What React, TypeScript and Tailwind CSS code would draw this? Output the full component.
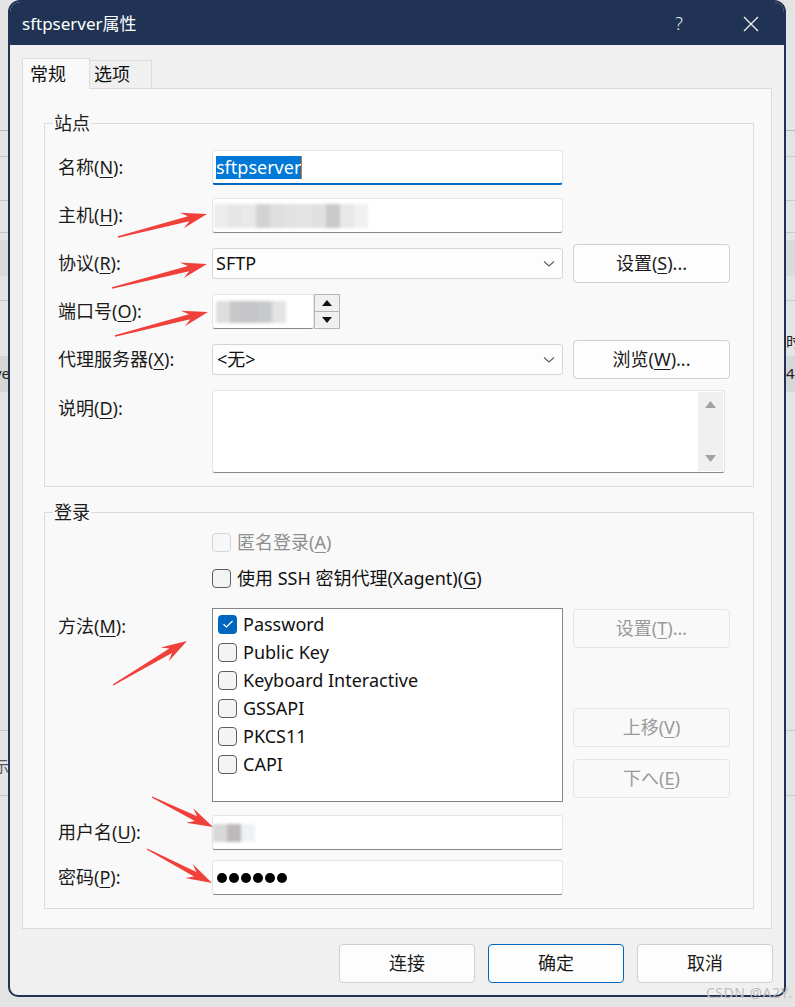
import React from "react";

const font = "font-['Noto_Sans','Noto_Sans_CJK_SC',sans-serif]";

function Mn({ pre, k, post = "" }: { pre: string; k: string; post?: string }) {
  return (
    <span>
      {pre}(<span className="underline decoration-1 underline-offset-[3px]">{k}</span>){post}
    </span>
  );
}

function Label({ children, top }: { children: React.ReactNode; top?: boolean }) {
  return (
    <div className={`flex w-[154px] shrink-0 text-[18px] text-[#1b1b1b] ${top ? "items-start pt-[5px]" : "items-center"}`}>
      {children}
    </div>
  );
}

function Group({ title, className, children }: { title: string; className?: string; children: React.ReactNode }) {
  return (
    <div className={`relative border border-[#dcdcdc] ${className ?? ""}`}>
      <span className="absolute -top-[13px] left-[8px] bg-[#f9f9f9] px-px text-[18px] leading-[24px] text-[#1b1b1b]">{title}</span>
      {children}
    </div>
  );
}

function Chevron() {
  return (
    <svg width="12" height="8" viewBox="0 0 12 8">
      <path d="M1 1.5 L6 6 L11 1.5" fill="none" stroke="#5c5c5c" strokeWidth="1.1" />
    </svg>
  );
}

function Btn({
  children,
  disabled,
  primary,
  wide = true,
  className,
}: {
  children: React.ReactNode;
  disabled?: boolean;
  primary?: boolean;
  wide?: boolean;
  className?: string;
}) {
  return (
    <div
      className={`flex h-[39px] items-center justify-center rounded-[4px] border text-[18px] ${wide ? "w-[157px]" : "w-[136px]"} ${
        disabled
          ? "border-[#e5e5e5] bg-[#f9f9f9] text-[#9a9a9a]"
          : primary
          ? "border-[#0067c0] bg-[#fdfdfd] text-[#1b1b1b]"
          : "border-[#d0d0d0] bg-[#fdfdfd] text-[#1b1b1b]"
      } ${className ?? ""}`}
    >
      {children}
    </div>
  );
}

function Box({ checked, disabled }: { checked?: boolean; disabled?: boolean }) {
  if (checked)
    return (
      <div className="flex h-[19px] w-[19px] shrink-0 items-center justify-center rounded-[4px] bg-[#0067c0]">
        <svg width="12" height="10" viewBox="0 0 12 10">
          <path d="M1.5 5.2 L4.5 8 L10.5 2" fill="none" stroke="#fff" strokeWidth="1.2" />
        </svg>
      </div>
    );
  return (
    <div
      className={`h-[19px] w-[19px] shrink-0 rounded-[4px] border ${
        disabled ? "border-[#d4d4d4] bg-[#f7f7f7]" : "border-[#5e5e5e] bg-[#f4f4f4]"
      }`}
    />
  );
}

function Mosaic({ cells, h }: { cells: string[]; h: number }) {
  return (
    <div className="flex blur-[1.5px]" style={{ height: h }}>
      {cells.map((c, i) => (
        <div key={i} className="w-[14px]" style={{ background: c }} />
      ))}
    </div>
  );
}

function arrowPts(x1: number, y1: number, x2: number, y2: number) {
  const dx = x2 - x1;
  const dy = y2 - y1;
  const len = Math.hypot(dx, dy);
  const ux = dx / len;
  const uy = dy / len;
  const nx = -uy;
  const ny = ux;
  const hl = 24;
  const hw = 8;
  const bw = 2.6;
  const tw = 0.7;
  const bx = x2 - ux * hl;
  const by = y2 - uy * hl;
  const p = (x: number, y: number) => `${x.toFixed(1)},${y.toFixed(1)}`;
  return [
    p(x1 + nx * tw, y1 + ny * tw),
    p(bx + ux * 5 + nx * bw, by + uy * 5 + ny * bw),
    p(bx - ux * 2 + nx * hw, by - uy * 2 + ny * hw),
    p(x2, y2),
    p(bx - ux * 2 - nx * hw, by - uy * 2 - ny * hw),
    p(bx + ux * 5 - nx * bw, by + uy * 5 - ny * bw),
    p(x1 - nx * tw, y1 - ny * tw),
  ].join(" ");
}

const arrows = [
  [118, 237, 207, 214],
  [112, 288, 207, 264],
  [115, 336, 208, 312],
  [113, 685, 187, 641],
  [152, 797, 213, 827],
  [147, 849, 212, 883],
];

const methods = ["Password", "Public Key", "Keyboard Interactive", "GSSAPI", "PKCS11", "CAPI"];

export default function App() {
  return (
    <div className={`relative h-[1007px] w-[795px] overflow-hidden bg-[#e4e4e4] ${font}`}>
      {/* window behind the dialog */}
      <div className="absolute inset-0">
        <div className="absolute left-0 top-[130px] h-px w-full bg-[#b8b8b8]" />
        <div className="absolute left-0 top-[156px] h-px w-full bg-[#c8c8c8]" />
        <div className="absolute left-0 top-[200px] h-px w-full bg-[#c8c8c8]" />
        <div className="absolute left-0 top-[232px] h-px w-full bg-[#c8c8c8]" />
        <div className="absolute left-0 top-[240px] h-[36px] w-full bg-[#dadada]" />
        <div className="absolute left-0 top-[300px] h-px w-full bg-[#c8c8c8]" />
        <div className="absolute left-0 top-[356px] h-[36px] w-full bg-[#d6d6d6]" />
        <div className="absolute left-0 top-[730px] h-px w-full bg-[#c8c8c8]" />
        <div className="absolute left-0 top-[795px] h-px w-full bg-[#c8c8c8]" />
        <div className="absolute left-[786px] top-[330px] text-[15px] text-[#222]">时</div>
        <div className="absolute left-[786px] top-[362px] text-[15px] text-[#222]">4</div>
        <div className="absolute left-[-6px] top-[362px] text-[15px] text-[#222]">ve</div>
        <div className="absolute left-[-6px] top-[755px] text-[15px] text-[#555]">示</div>
      </div>

      <div className="relative ml-[8px] flex h-[997px] w-[778px] flex-col overflow-hidden rounded-[10px] rounded-t-[12px] border-2 border-[#213354] bg-[#f0f0f0]">
        {/* title bar */}
        <div className="flex h-[43px] shrink-0 items-center bg-[#213354] pl-[12px] text-white">
          <span className="text-[17px]">sftpserver属性</span>
          <span className="ml-auto mr-[60px] text-[18px] font-light text-[#e8e8e8]">?</span>
          <svg className="mr-[25px]" width="16" height="16" viewBox="0 0 16 16">
            <path d="M1 1 L15 15 M15 1 L1 15" stroke="#f2f2f2" strokeWidth="1.3" />
          </svg>
        </div>

        <div className="flex flex-col px-[12px] pt-[13px]">
          {/* tabs */}
          <div className="relative z-10 flex h-[30px] items-end">
            <div className="flex h-[31px] w-[68px] translate-y-px items-center border border-b-0 border-[#dcdcdc] bg-[#f9f9f9] pl-[7px] text-[18px] text-[#111]">
              常规
            </div>
            <div className="flex h-[28px] w-[62px] items-center border border-b-0 border-l-0 border-[#dcdcdc] bg-[#f0f0f0] pl-[4px] text-[18px] text-[#111]">
              选项
            </div>
          </div>

          {/* tab panel */}
          <div className="h-[841px] border border-[#dcdcdc] bg-[#f9f9f9] pl-[21px]">
            <Group title="站点" className="mt-[34px] w-[710px] pl-[13px] pt-[26px] pb-[13px]">
              <div className="flex h-[35px]">
                <Label><Mn pre="名称" k="N" post=":" /></Label>
                <div className="flex h-[35px] w-[351px] items-center rounded-[3px] border border-b-2 border-[#e5e5e5] border-b-[#0067c0] bg-white pl-[3px]">
                  <span className="bg-[#0078d7] text-[18px] leading-[23px] text-white">sftpserver</span>
                  <span className="h-[23px] w-px bg-[#e07020]" />
                </div>
              </div>

              <div className="mt-[13px] flex h-[35px]">
                <Label><Mn pre="主机" k="H" post=":" /></Label>
                <div className="flex h-[35px] w-[351px] items-center rounded-[3px] border border-[#e5e5e5] border-b-[#868686] bg-white pl-[1px]">
                  <Mosaic
                    h={24}
                    cells={["#ececec", "#e6e6e6", "#e9e9e9", "#d2d2d2", "#dedede", "#e2e2e2", "#e4e4e4", "#e0e0e0", "#c9c9c9", "#e8e8e8", "#f0f0f0"]}
                  />
                </div>
              </div>

              <div className="mt-[11px] flex h-[39px] items-center">
                <Label><Mn pre="协议" k="R" post=":" /></Label>
                <div className="flex h-[31px] w-[351px] items-center justify-between rounded-[3px] border border-[#d5d5d5] bg-[#fdfdfd] pl-[3px] pr-[7px] text-[18px] text-[#111]">
                  <span>SFTP</span>
                  <Chevron />
                </div>
                <Btn className="ml-[10px]"><Mn pre="设置" k="S" post="..." /></Btn>
              </div>

              <div className="mt-[11px] flex h-[35px]">
                <Label><Mn pre="端口号" k="O" post=":" /></Label>
                <div className="flex h-[35px] w-[102px] items-center rounded-[3px] border border-[#e5e5e5] border-b-[#868686] bg-white pl-[3px]">
                  <Mosaic h={22} cells={["#dedede", "#c8c6c6", "#c4c6c9", "#c7cacd", "#e4e4e4"]} />
                </div>
                <div className="flex h-[35px] w-[26px] flex-col border border-[#b5b5b5] bg-[#f0f0f0]">
                  <div className="flex flex-1 items-center justify-center border-b border-[#b5b5b5]">
                    <svg width="10" height="6" viewBox="0 0 10 6"><path d="M5 0 L10 6 L0 6 Z" fill="#111" /></svg>
                  </div>
                  <div className="flex flex-1 items-center justify-center">
                    <svg width="10" height="6" viewBox="0 0 10 6"><path d="M0 0 L10 0 L5 6 Z" fill="#111" /></svg>
                  </div>
                </div>
              </div>

              <div className="mt-[11px] flex h-[39px] items-center">
                <Label><Mn pre="代理服务器" k="X" post=":" /></Label>
                <div className="flex h-[31px] w-[351px] items-center justify-between rounded-[3px] border border-[#d5d5d5] bg-[#fdfdfd] pl-[4px] pr-[7px] text-[18px] text-[#111]">
                  <span>&lt;无&gt;</span>
                  <Chevron />
                </div>
                <Btn className="ml-[10px]"><Mn pre="浏览" k="W" post="..." /></Btn>
              </div>

              <div className="mt-[11px] flex h-[83px]">
                <Label top><Mn pre="说明" k="D" post=":" /></Label>
                <div className="flex h-[83px] w-[513px] justify-end rounded-[3px] border border-[#e5e5e5] border-b-[#868686] bg-white p-px">
                  <div className="flex w-[25px] flex-col items-center justify-between bg-[#f0f0f0] py-[9px]">
                    <svg width="11" height="7" viewBox="0 0 11 7"><path d="M5.5 0 L11 7 L0 7 Z" fill="#a2a2a2" /></svg>
                    <svg width="11" height="7" viewBox="0 0 11 7"><path d="M0 0 L11 0 L5.5 7 Z" fill="#a2a2a2" /></svg>
                  </div>
                </div>
              </div>
            </Group>

            <Group title="登录" className="mt-[25px] w-[710px] pl-[13px] pt-[19px] pb-[13px]">
              <div className="flex h-[20px] items-center">
                <div className="w-[154px] shrink-0" />
                <Box disabled />
                <span className="ml-[6px] text-[18px] text-[#8f8f8f]"><Mn pre="匿名登录" k="A" /></span>
              </div>
              <div className="mt-[16px] flex h-[20px] items-center">
                <div className="w-[154px] shrink-0" />
                <Box />
                <span className="ml-[6px] text-[18px] text-[#111]"><Mn pre="使用 SSH 密钥代理(Xagent)" k="G" /></span>
              </div>

              <div className="mt-[20px] flex h-[194px]">
                <Label top><Mn pre="方法" k="M" post=":" /></Label>
                <div className="flex h-[194px] w-[351px] flex-col border border-[#858585] bg-white pl-[5px] pt-px">
                  {methods.map((m, i) => (
                    <div key={m} className="flex h-[28px] items-center">
                      <Box checked={i === 0} />
                      <span className="ml-[6px] text-[18px] text-[#111]">{m}</span>
                    </div>
                  ))}
                </div>
                <div className="ml-[10px] flex flex-col pt-px">
                  <Btn disabled><Mn pre="设置" k="T" post="..." /></Btn>
                  <Btn disabled className="mt-[60px]"><Mn pre="上移" k="V" /></Btn>
                  <Btn disabled className="mt-[12px]"><Mn pre="下へ" k="E" /></Btn>
                </div>
              </div>

              <div className="mt-[13px] flex h-[35px]">
                <Label><Mn pre="用户名" k="U" post=":" /></Label>
                <div className="flex h-[35px] w-[351px] items-center rounded-[3px] border border-[#e5e5e5] border-b-[#868686] bg-white">
                  <Mosaic h={18} cells={["#d8d8d8", "#bcb9b8", "#eef2f6"]} />
                </div>
              </div>

              <div className="mt-[10px] flex h-[35px]">
                <Label><Mn pre="密码" k="P" post=":" /></Label>
                <div className="flex h-[35px] w-[351px] items-center gap-[2px] rounded-[3px] border border-[#e5e5e5] border-b-[#868686] bg-white pl-[4px]">
                  {[0, 1, 2, 3, 4, 5].map((i) => (
                    <span key={i} className="h-[10px] w-[10px] rounded-full bg-black" />
                  ))}
                </div>
              </div>
            </Group>
          </div>

          {/* dialog buttons */}
          <div className="-mr-px mt-[15px] flex justify-end gap-[13px]">
            <Btn wide={false}>连接</Btn>
            <Btn wide={false} primary>确定</Btn>
            <Btn wide={false}>取消</Btn>
          </div>
        </div>
      </div>

      <div className="absolute left-[706px] top-[985px] text-[14px] leading-[16px] tracking-[0.5px] text-[#bdbdbd]">CSDN @A2Y.</div>

      <svg className="pointer-events-none absolute inset-0" width="795" height="1007">
        {arrows.map(([a, b, c, d], i) => (
          <polygon key={i} points={arrowPts(a, b, c, d)} fill="#f0403a" />
        ))}
      </svg>
    </div>
  );
}
